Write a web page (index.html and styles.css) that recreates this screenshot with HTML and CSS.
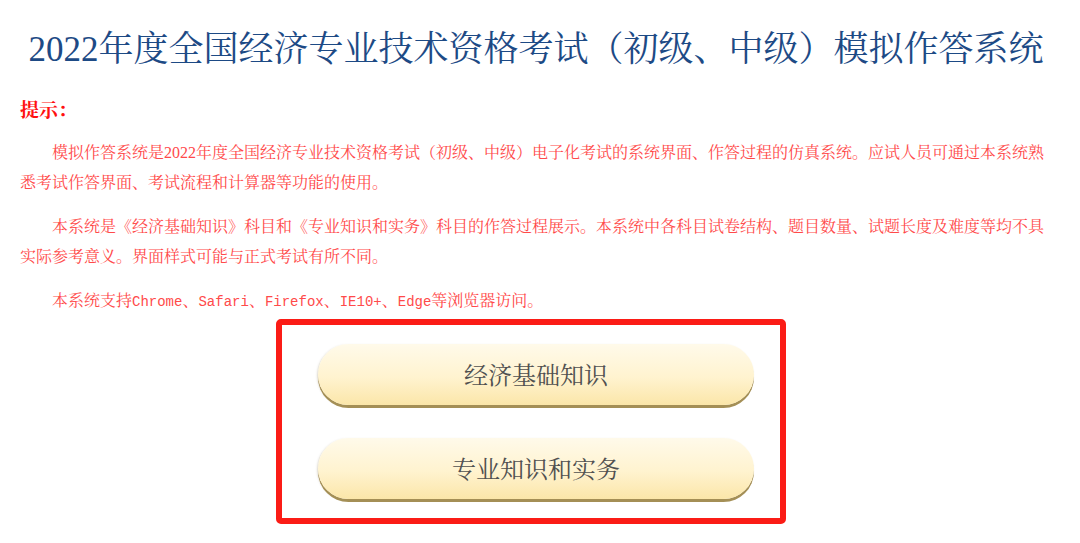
FILE: index.html
```html
<!DOCTYPE html>
<html lang="zh-CN">
<head>
    <meta charset="UTF-8">
    <meta name="viewport" content="width=device-width, initial-scale=1.0">
    <title>2022年度全国经济专业技术资格考试（初级、中级）模拟作答系统</title>
    <link rel="stylesheet" href="styles.css">
</head>
<body>
    <div class="page">
        <h1 class="title">2022年度全国经济专业技术资格考试（初级、中级）模拟作答系统</h1>
        <div class="tips">
            <h3>提示：</h3>
            <p>模拟作答系统是2022年度全国经济专业技术资格考试（初级、中级）电子化考试的系统界面、作答过程的仿真系统。应试人员可通过本系统熟悉考试作答界面、考试流程和计算器等功能的使用。</p>
            <p>本系统是《经济基础知识》科目和《专业知识和实务》科目的作答过程展示。本系统中各科目试卷结构、题目数量、试题长度及难度等均不具实际参考意义。界面样式可能与正式考试有所不同。</p>
            <p>本系统支持<span class="latin">Chrome</span>、<span class="latin">Safari</span>、<span class="latin">Firefox</span>、<span class="latin">IE10+</span>、<span class="latin">Edge</span>等浏览器访问。</p>
        </div>
        <div class="subjects">
            <a class="subject-btn" href="#">经济基础知识</a>
            <a class="subject-btn" href="#">专业知识和实务</a>
        </div>
    </div>
</body>
</html>
```

FILE: styles.css
```css
body {
    margin: 0;
    padding: 0;
    background-color: #fff;
    font-family: "Liberation Serif", "Noto Serif CJK SC", "Noto Sans CJK SC", serif;
}
.page {
    padding: 27px 28px 0 20px;
}
.title {
    margin: 0;
    font-size: 35px;
    line-height: 45px;
    font-weight: normal;
    text-align: center;
    color: #1d4a85;
    white-space: nowrap;
}
.tips {
    color: #ff4a4a;
}
.tips h3 {
    margin: 27px 0 15px 0;
    font-size: 19px;
    line-height: 24px;
    color: #ff1010;
}
.tips p {
    margin: 0 0 14px 0;
    font-size: 16px;
    line-height: 30px;
    text-indent: 2em;
}
.tips p:last-child {
    margin-bottom: 0;
}
.latin {
    font-family: "Liberation Mono", monospace;
    font-size: 14px;
}
.subjects {
    width: 498px;
    margin: 2px 0 0 256px;
    padding: 19px 0 19px 0;
    border: 6px solid #fb1c16;
    border-radius: 5px;
    display: flex;
    flex-direction: column;
    align-items: center;
    gap: 33px;
}
.subject-btn {
    display: block;
    box-sizing: border-box;
    width: 436px;
    height: 61px;
    margin-left: 10px;
    padding-top: 3px;
    line-height: 58px;
    text-align: center;
    text-decoration: none;
    font-size: 24px;
    color: #505050;
    border-radius: 31px;
    background: linear-gradient(to bottom, #fffaea 0%, #fff3cf 55%, #fbe6a9 100%);
    box-shadow: 0 3px 0 #a48f56, -1px 1px 2px rgba(120, 100, 50, 0.25);
}
```
